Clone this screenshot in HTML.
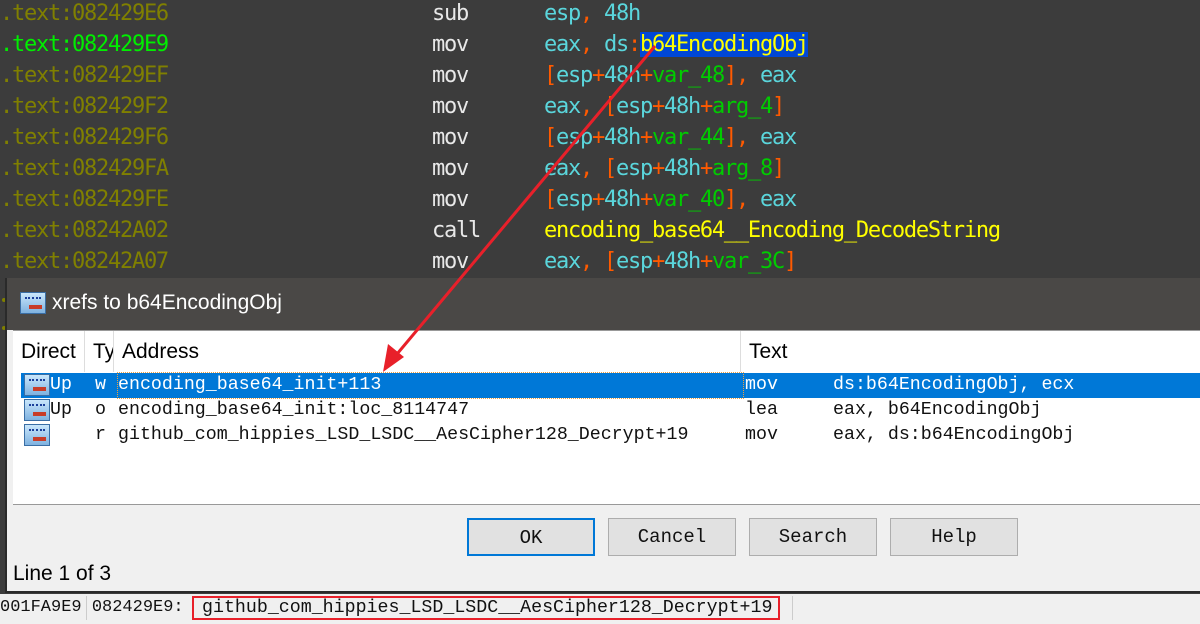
<!DOCTYPE html>
<html><head><meta charset="utf-8"><style>
*{margin:0;padding:0;box-sizing:border-box}
body{width:1200px;height:624px;overflow:hidden;background:#3c3c3c;position:relative;font-family:"Liberation Sans",sans-serif}
.ln{position:absolute;left:0;height:31px;width:1200px;font-family:"DejaVu Sans Mono","Liberation Mono",monospace;font-size:22px;letter-spacing:-1.25px;white-space:pre;line-height:31px}
.ln span.m{position:absolute;left:432px}
.ln span.p{position:absolute;left:544px}
.a{color:#808000}.g{color:#00ee00}.w{color:#e8e8e8}.c{color:#5ad6dc}.o{color:#ff5a00}.v{color:#00cc00}.y{color:#ffff00}
.ab{position:absolute}
.dlg{position:absolute;left:5px;top:278px;width:1195px;height:315px;background:#f0f0f0;border-left:2px solid #2a2a2a;border-bottom:2px solid #2a2a2a}
.title{position:absolute;left:0;top:0;width:100%;height:52px;background:#4a4846;color:#fff;font-size:21px}
.list{position:absolute;left:6px;top:52px;right:0;height:175px;background:#fff;border-top:1px solid #999;border-bottom:1px solid #999}
.hdr{position:absolute;top:0;height:41px;font-size:21px;color:#000;line-height:41px;border-right:1px solid #ddd;padding-left:8px;overflow:hidden;white-space:nowrap}
.row{position:absolute;left:8px;right:0;height:25px;font-family:"Liberation Mono",monospace;font-size:18.3px;line-height:25px;white-space:pre;color:#111}
.row span{position:absolute}
.sel{background:#0078d7;color:#fff}
.btn{position:absolute;top:240px;width:128px;height:38px;background:#e1e1e1;border:1px solid #adadad;font-family:"Liberation Mono",monospace;font-size:19px;text-align:center;line-height:36px;color:#111}
.ic{position:absolute;width:26px;height:22px;background:linear-gradient(#c9e6fb,#7fb2e0);border:1px solid #3a6ea5}
.ic:before{content:"";position:absolute;left:4px;top:4px;width:16px;height:3px;border-top:2px dotted #1b3f9a}
.ic:after{content:"";position:absolute;left:8px;top:12px;width:13px;height:4px;background:#c83c28}
</style></head><body>
<div class="ln" style="top:-2px"><span class="a">.text:082429E6</span><span class="m w">sub</span><span class="p"><span class="c">esp</span><span class="o">,</span> <span class="c">48h</span></span></div>
<div class="ln" style="top:29px"><span class="g">.text:082429E9</span><span class="m w">mov</span><span class="p"><span class="c">eax</span><span class="o">,</span> <span class="c">ds</span><span class="o">:</span><span class="y" style="background:#0047d6">b64EncodingObj</span></span></div>
<div class="ln" style="top:60px"><span class="a">.text:082429EF</span><span class="m w">mov</span><span class="p"><span class="o">[</span><span class="c">esp</span><span class="o">+</span><span class="c">48h</span><span class="o">+</span><span class="v">var_48</span><span class="o">],</span> <span class="c">eax</span></span></div>
<div class="ln" style="top:91px"><span class="a">.text:082429F2</span><span class="m w">mov</span><span class="p"><span class="c">eax</span><span class="o">,</span> <span class="o">[</span><span class="c">esp</span><span class="o">+</span><span class="c">48h</span><span class="o">+</span><span class="v">arg_4</span><span class="o">]</span></span></div>
<div class="ln" style="top:122px"><span class="a">.text:082429F6</span><span class="m w">mov</span><span class="p"><span class="o">[</span><span class="c">esp</span><span class="o">+</span><span class="c">48h</span><span class="o">+</span><span class="v">var_44</span><span class="o">],</span> <span class="c">eax</span></span></div>
<div class="ln" style="top:153px"><span class="a">.text:082429FA</span><span class="m w">mov</span><span class="p"><span class="c">eax</span><span class="o">,</span> <span class="o">[</span><span class="c">esp</span><span class="o">+</span><span class="c">48h</span><span class="o">+</span><span class="v">arg_8</span><span class="o">]</span></span></div>
<div class="ln" style="top:184px"><span class="a">.text:082429FE</span><span class="m w">mov</span><span class="p"><span class="o">[</span><span class="c">esp</span><span class="o">+</span><span class="c">48h</span><span class="o">+</span><span class="v">var_40</span><span class="o">],</span> <span class="c">eax</span></span></div>
<div class="ln" style="top:215px"><span class="a">.text:08242A02</span><span class="m w">call</span><span class="p y">encoding_base64__Encoding_DecodeString</span></div>
<div class="ln" style="top:246px"><span class="a">.text:08242A07</span><span class="m w">mov</span><span class="p"><span class="c">eax</span><span class="o">,</span> <span class="o">[</span><span class="c">esp</span><span class="o">+</span><span class="c">48h</span><span class="o">+</span><span class="v">var_3C</span><span class="o">]</span></span></div>
<div class="ab" style="left:2px;top:298px;width:4px;height:4px;border-radius:2px;background:#808000"></div>
<div class="ab" style="left:2px;top:326px;width:4px;height:4px;border-radius:2px;background:#808000"></div>
<div class="dlg">
 <div class="title"><div class="ic" style="left:13px;top:14px"></div><span class="ab" style="left:45px;top:13px">xrefs to b64EncodingObj</span></div>
 <div class="list">
  <div class="hdr" style="left:0;width:72px">Direct</div>
  <div class="hdr" style="left:72px;width:29px">Ty</div>
  <div class="hdr" style="left:101px;width:627px">Address</div>
  <div class="hdr" style="left:728px;width:460px;border:0">Text</div>
  <div class="row sel" style="top:42px"><span style="left:29px">Up</span><span style="left:74px">w</span><span style="left:97px;width:625px;height:25px;outline:1px dotted #f0a040">encoding_base64_init+113</span><span style="left:724px">mov</span><span style="left:812px">ds:b64EncodingObj, ecx</span></div>
  <div class="row" style="top:67px"><span style="left:29px">Up</span><span style="left:74px">o</span><span style="left:97px">encoding_base64_init:loc_8114747</span><span style="left:724px">lea</span><span style="left:812px">eax, b64EncodingObj</span></div>
  <div class="row" style="top:92px"><span style="left:74px">r</span><span style="left:97px">github_com_hippies_LSD_LSDC__AesCipher128_Decrypt+19</span><span style="left:724px">mov</span><span style="left:812px">eax, ds:b64EncodingObj</span></div>
  <div class="ic" style="left:11px;top:43px"></div>
  <div class="ic" style="left:11px;top:68px"></div>
  <div class="ic" style="left:11px;top:93px"></div>
 </div>
 <div class="btn" style="left:460px;border:2px solid #0078d7">OK</div>
 <div class="btn" style="left:601px">Cancel</div>
 <div class="btn" style="left:742px">Search</div>
 <div class="btn" style="left:883px">Help</div>
 <div class="ab" style="left:6px;top:284px;font-size:21px;color:#000">Line 1 of 3</div>
</div>
<div class="ab" style="left:0;top:594px;width:1200px;height:30px;background:#f0f0f0;font-family:'Liberation Mono',monospace;font-size:17px;line-height:28px;white-space:pre;color:#111">001FA9E9 082429E9:</div>
<div class="ab" style="left:86px;top:596px;width:1px;height:24px;background:#ccc"></div>
<div class="ab" style="left:792px;top:596px;width:1px;height:24px;background:#ccc"></div>
<div class="ab" style="left:192px;top:596px;width:588px;height:24px;border:2px solid #e8202a;font-family:'Liberation Mono',monospace;font-size:18.3px;line-height:20px;padding-left:8px;color:#111;white-space:pre">github_com_hippies_LSD_LSDC__AesCipher128_Decrypt+19</div>
<svg class="ab" style="left:0;top:0" width="1200" height="624"><line x1="655" y1="46" x2="392" y2="360" stroke="#e8202a" stroke-width="3"/><polygon points="383,372 388,344 404,357" fill="#e8202a"/></svg>
</body></html>
